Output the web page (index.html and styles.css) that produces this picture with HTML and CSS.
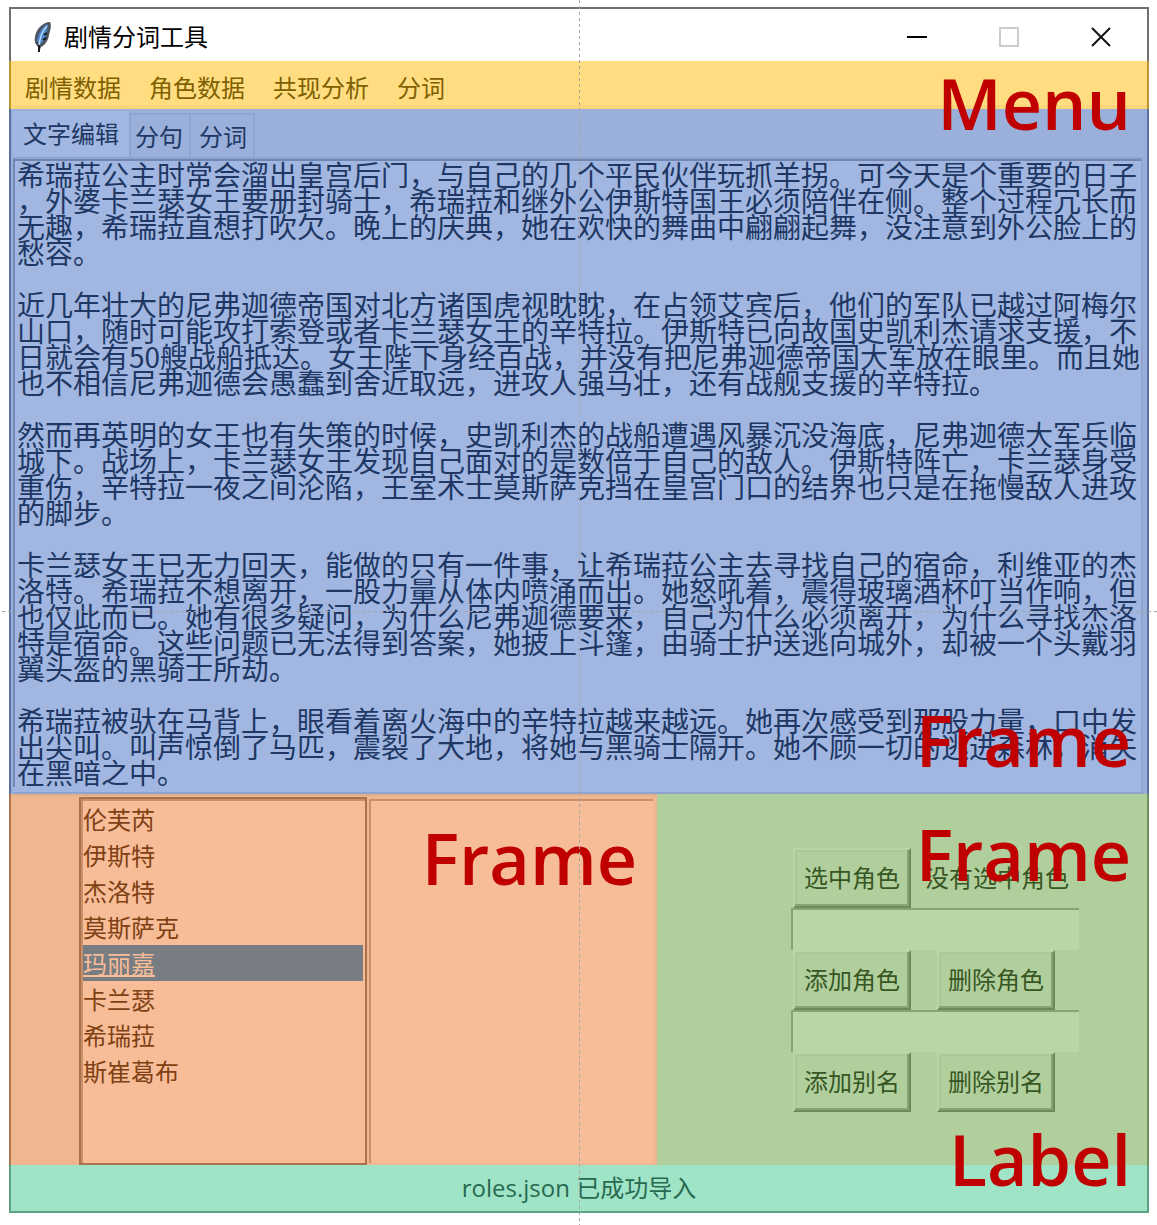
FILE: index.html
```html
<!DOCTYPE html>
<html lang="zh-CN">
<head>
<meta charset="utf-8">
<meta name="viewport" content="width=device-width, initial-scale=1">
<title>剧情分词工具</title>
<link rel="stylesheet" href="styles.css">
</head>
<body>
<div class="canvas">
  <main class="window">
    <header class="titlebar">
      <svg class="feather" viewBox="0 0 20 32" aria-hidden="true">
        <path d="M17 1C10 1 3 8 2 16c-1 4 0 7 3 10l1 5 2-5c4-2 7-6 8-12 1-4 3-9 1-13z" fill="#4d5660"/>
        <path d="M15 3C9 6 5 12 4 20l3 3c5-3 7-10 8-20z" fill="#4b87cb"/>
        <path d="M14 5C10 9 7 15 6 25" fill="none" stroke="#b9d8f5" stroke-width="1.5"/>
        <path d="M6 24v7M14 12l-3 2M13 17l-3 2" stroke="#17191c" stroke-width="2"/>
      </svg>
      <h1 class="title">剧情分词工具</h1>
      <div class="window-buttons">
        <button class="window-button" type="button" aria-label="最小化"><svg viewBox="0 0 20 20"><path d="M0 10h20" stroke="#000" stroke-width="2"/></svg></button>
        <button class="window-button" type="button" aria-label="最大化" disabled><svg viewBox="0 0 20 20"><path d="M1 1h18v18H1z" fill="none" stroke="#ccc" stroke-width="2"/></svg></button>
        <button class="window-button" type="button" aria-label="关闭"><svg viewBox="0 0 20 20"><path d="M1 1l18 18M19 1L1 19" stroke="#111" stroke-width="2"/></svg></button>
      </div>
    </header>

    <nav class="menu">
      <button class="menu-item" type="button">剧情数据</button>
      <button class="menu-item" type="button">角色数据</button>
      <button class="menu-item" type="button">共现分析</button>
      <button class="menu-item" type="button">分词</button>
      <span class="note note-menu">Menu</span>
    </nav>

    <section class="notebook">
      <div class="tabs" role="tablist">
        <button class="tab tab-active" type="button" role="tab" aria-selected="true">文字编辑</button>
        <button class="tab" type="button" role="tab" aria-selected="false">分句</button>
        <button class="tab" type="button" role="tab" aria-selected="false">分词</button>
      </div>
      <div class="pane">
        <textarea class="editor" rows="24" wrap="off" spellcheck="false" aria-label="文字编辑">希瑞菈公主时常会溜出皇宫后门，与自己的几个平民伙伴玩抓羊拐。可今天是个重要的日子
，外婆卡兰瑟女王要册封骑士，希瑞菈和继外公伊斯特国王必须陪伴在侧。整个过程冗长而
无趣，希瑞菈直想打吹欠。晚上的庆典，她在欢快的舞曲中翩翩起舞，没注意到外公脸上的
愁容。

近几年壮大的尼弗迦德帝国对北方诸国虎视眈眈，在占领艾宾后，他们的军队已越过阿梅尔
山口，随时可能攻打索登或者卡兰瑟女王的辛特拉。伊斯特已向故国史凯利杰请求支援，不
日就会有50艘战船抵达。女王陛下身经百战，并没有把尼弗迦德帝国大军放在眼里。而且她
也不相信尼弗迦德会愚蠢到舍近取远，进攻人强马壮，还有战舰支援的辛特拉。

然而再英明的女王也有失策的时候，史凯利杰的战船遭遇风暴沉没海底，尼弗迦德大军兵临
城下。战场上，卡兰瑟女王发现自己面对的是数倍于自己的敌人。伊斯特阵亡，卡兰瑟身受
重伤，辛特拉一夜之间沦陷，王室术士莫斯萨克挡在皇宫门口的结界也只是在拖慢敌人进攻
的脚步。

卡兰瑟女王已无力回天，能做的只有一件事，让希瑞菈公主去寻找自己的宿命，利维亚的杰
洛特。希瑞菈不想离开，一股力量从体内喷涌而出。她怒吼着，震得玻璃酒杯叮当作响，但
也仅此而已。她有很多疑问，为什么尼弗迦德要来，自己为什么必须离开，为什么寻找杰洛
特是宿命。这些问题已无法得到答案，她披上斗篷，由骑士护送逃向城外，却被一个头戴羽
翼头盔的黑骑士所劫。

希瑞菈被驮在马背上，眼看着离火海中的辛特拉越来越远。她再次感受到那股力量，口中发
出尖叫。叫声惊倒了马匹，震裂了大地，将她与黑骑士隔开。她不顾一切的逃进森林，消失
在黑暗之中。</textarea>
      </div>
      <span class="note note-notebook">Frame</span>
    </section>

    <div class="lower">
      <section class="lists">
        <select class="listbox listbox-focused" size="10" aria-label="角色">
          <option>伦芙芮</option>
          <option>伊斯特</option>
          <option>杰洛特</option>
          <option>莫斯萨克</option>
          <option selected>玛丽嘉</option>
          <option>卡兰瑟</option>
          <option>希瑞菈</option>
          <option>斯崔葛布</option>
        </select>
        <select class="listbox" size="10" aria-label="别名"></select>
        <span class="note note-lists">Frame</span>
      </section>
      <section class="controls">
        <form class="form">
          <div class="row row-status">
            <button class="button" type="button">选中角色</button>
            <span>没有选中角色</span>
          </div>
          <input class="entry" type="text" aria-label="角色名">
          <div class="row">
            <button class="button" type="button">添加角色</button>
            <button class="button" type="button">删除角色</button>
          </div>
          <input class="entry" type="text" aria-label="别名">
          <div class="row">
            <button class="button" type="button">添加别名</button>
            <button class="button" type="button">删除别名</button>
          </div>
        </form>
        <span class="note note-controls">Frame</span>
      </section>
    </div>

    <footer class="status">
      <span>roles.json 已成功导入</span>
      <span class="note note-status">Label</span>
    </footer>
  </main>
  <div class="guide guide-vertical"></div>
  <div class="guide guide-horizontal"></div>
</div>
</body>
</html>
```
FILE: styles.css
```css
* {
  box-sizing: border-box;
}

body {
  margin: 0;
  background: #fff;
  font-family: "Open Sans", "Noto Sans CJK SC", sans-serif;
  font-size: 24px;
  line-height: 36px;
}

button,
input,
select,
textarea {
  margin: 0;
  padding: 0;
  border: 0;
  border-radius: 0;
  background: none;
  color: inherit;
  font: inherit;
  outline: none;
}

.canvas {
  position: relative;
  padding: 7px 8px 12px 9px;
}

.titlebar {
  display: flex;
  align-items: center;
  height: 54px;
  padding-top: 4px;
  padding-left: 22px;
  border: 2px solid #707070;
  border-bottom: 0;
  background: #fff;
}

.feather {
  width: 20px;
  height: 32px;
  margin-right: 11px;
}

.title {
  flex: 1;
  margin: 0;
  font-size: 24px;
  font-weight: 400;
  line-height: 36px;
}

.window-buttons {
  display: flex;
}

.window-button {
  display: flex;
  align-items: center;
  justify-content: center;
  width: 92px;
  height: 48px;
}

.window-button svg {
  width: 20px;
  height: 20px;
}

.menu {
  position: relative;
  display: flex;
  height: 48px;
  border: solid #bf9730;
  border-width: 0 2px;
  background: #ffdd80;
  box-shadow: inset 0 -4px #f8d679;
  color: #7f6000;
}

.menu-item {
  padding: 6px 14px 0;
}

.notebook {
  position: relative;
  height: 685px;
  padding: 2px 4px 0 2px;
  border: solid #58719f;
  border-width: 0 2px;
  background: #9ab0da;
  color: #203764;
}

.tabs {
  display: flex;
  align-items: flex-end;
  height: 46px;
}

.tab {
  height: 44px;
  padding: 2px 6px 0 8px;
  border: solid #8ea4ce;
  border-width: 2px 2px 0 0;
}

.tab-active {
  z-index: 1;
  height: 46px;
  margin-right: -4px;
  padding: 0 10px;
  border-width: 0 2px 0 0;
  background: #a1b7e1;
}

.pane {
  height: 637px;
  border: solid #8ea4ce;
  border-width: 2px 2px 2px 0;
  background: #a1b7e1;
}

.editor {
  display: block;
  width: 100%;
  height: 628px;
  padding: 0 0 0 2px;
  border: solid #7187b1;
  border-width: 2px 0 0 2px;
  overflow: hidden;
  resize: none;
  font-family: "Noto Sans CJK SC", sans-serif;
  font-size: 28px;
  line-height: 26px;
}

.lower {
  display: grid;
  grid-template-columns: 648fr 492fr;
  height: 371px;
}

.lists {
  position: relative;
  display: flex;
  justify-content: flex-end;
  gap: 2px;
  padding: 3px 4px 0 0;
  border-left: 2px solid #b07550;
  background: #f0b691;
  box-shadow: inset 0 2px #e5ae8b;
  color: #7f4013;
}

.listbox {
  width: 284px;
  height: 364px;
  margin-top: 2px;
  border: solid #c98f69;
  border-width: 2px 0 0 2px;
  background: #f7bd98;
  overflow: hidden;
}

.listbox-focused {
  width: 288px;
  height: 368px;
  margin-top: 0;
  border: 2px solid #a9714c;
  box-shadow: inset 2px 2px #c98f69;
  padding: 2px;
}

.listbox option {
  height: 36px;
  min-height: 36px;
  padding: 0;
}

.listbox option:checked {
  background: #787c83 linear-gradient(#787c83, #787c83);
  color: #f7bd98;
  text-decoration: underline;
}

.controls {
  position: relative;
  display: flex;
  align-items: center;
  justify-content: flex-end;
  padding-right: 68px;
  border-right: 2px solid #72905e;
  background: #b0cf9c;
  color: #375623;
}

.form {
  display: flex;
  flex-direction: column;
  width: 288px;
}

.row {
  display: flex;
  align-items: center;
  gap: 26px;
  padding-left: 2px;
}

.row-status {
  gap: 14px;
}

.button {
  width: 118px;
  height: 60px;
  border: 2px solid;
  border-color: #b8d7a4 #6d8a59 #6d8a59 #b8d7a4;
  box-shadow: inset -2px -2px #87a573, inset 2px 2px #abc996;
}

.entry {
  width: 100%;
  height: 42px;
  border: solid #87a573;
  border-width: 2px 0 0 2px;
  background: #b8d7a4;
}

.status {
  position: relative;
  height: 48px;
  padding-top: 5px;
  border: 2px solid #5fa387;
  border-top: 0;
  background: #a0e4c8;
  color: #286a50;
  text-align: center;
}

.note {
  position: absolute;
  z-index: 2;
  right: 16px;
  color: #c00000;
  font-family: "Open Sans", sans-serif;
  font-size: 70px;
  font-weight: 600;
  line-height: 80px;
  pointer-events: none;
}

.note-menu {
  top: 2px;
}

.note-notebook {
  bottom: 14px;
}

.note-lists {
  top: 24px;
  right: 20px;
}

.note-controls {
  top: 20px;
}

.note-status {
  bottom: 12px;
}

.guide {
  position: absolute;
  z-index: 3;
  pointer-events: none;
}

.guide-vertical {
  top: 0;
  bottom: 0;
  left: 50%;
  width: 1px;
  background: repeating-linear-gradient(#a6a6a6 0 3px, transparent 3px 6px);
}

.guide-horizontal {
  top: calc(50% - 2px);
  right: 0;
  left: 2px;
  height: 1px;
  background: repeating-linear-gradient(90deg, #a6a6a6 0 3px, transparent 3px 6px);
}
```
